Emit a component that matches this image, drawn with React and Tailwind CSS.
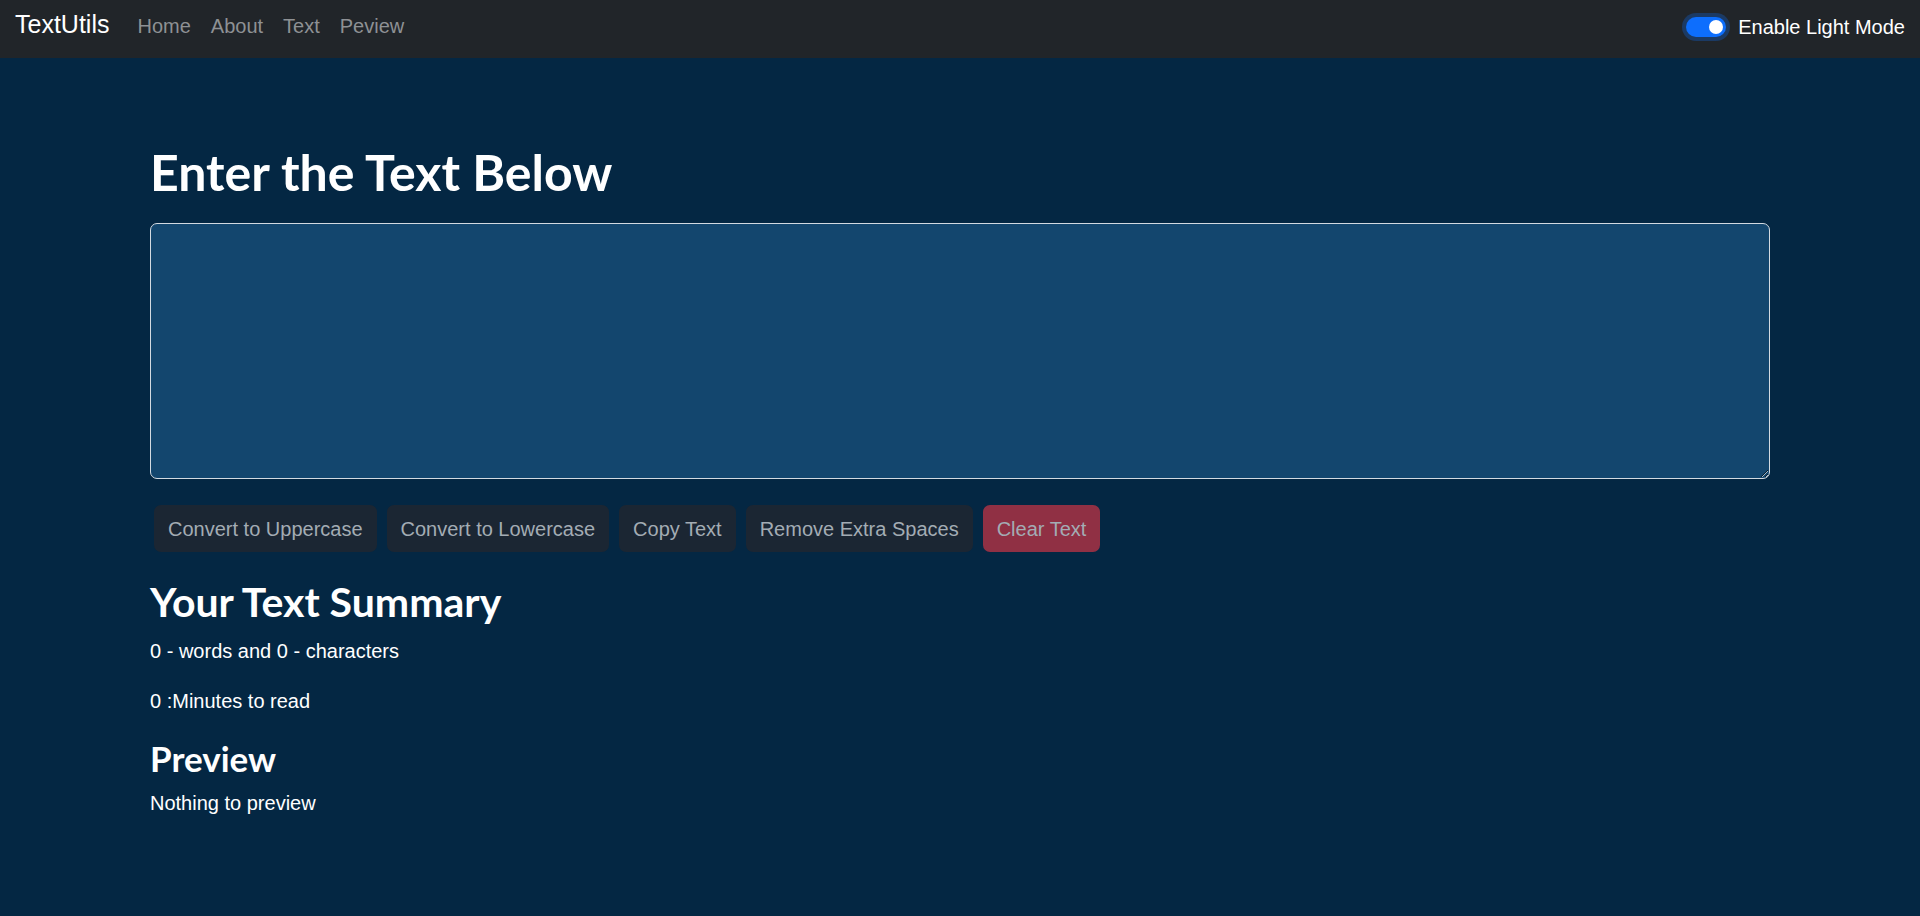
import { useState } from "react";

const Navbar = ({ onToggle }) => {
  return (
    <nav className="h-[58px] bg-[#212529] flex items-baseline justify-between px-[15px] pt-[6px]">
      <div className="flex items-baseline">
        <a href="#" className="text-[25px] leading-[37px] text-white mr-[18px]">
          TextUtils
        </a>
        <ul className="flex items-baseline text-[20px] leading-[30px] text-[#8e9194]">
          <li className="px-[10px]">Home</li>
          <li className="px-[10px]">About</li>
          <li className="px-[10px]">Text</li>
          <li className="px-[10px]">Peview</li>
        </ul>
      </div>
      <div className="flex items-center self-center mb-[10px]">
        <button
          onClick={onToggle}
          className="w-[40px] h-[20px] rounded-full bg-[#0d6efd] flex items-center justify-end pr-[3px] ring-[4px] ring-[#1b3a64] mr-[12px]"
        >
          <span className="w-[14px] h-[14px] rounded-full bg-white"></span>
        </button>
        <span className="text-[20px] leading-[30px] text-white">Enable Light Mode</span>
      </div>
    </nav>
  );
};

const Btn = ({ children, danger }) => (
  <button
    disabled
    className={`h-[47px] px-[14px] rounded-[7px] text-[20px] leading-[30px] text-[#a3acb4] mx-[5px] ${
      danger ? "bg-[#903044]" : "bg-[#1b2633]"
    }`}
  >
    {children}
  </button>
);

const heading = { fontFamily: 'Lato, "Liberation Sans", sans-serif' };

export default function App() {
  const [text, setText] = useState("");
  const words = text.split(/\s+/).filter((w) => w.length > 0).length;

  return (
    <div
      className="min-h-[916px] bg-[#042743] text-white"
      style={{ fontFamily: '"Liberation Sans", Arial, sans-serif' }}
    >
      <Navbar onToggle={() => {}} />

      <div className="px-[150px] pt-[84px]">
        {/* Text area */}
        <h1 style={heading} className="text-[50px] leading-[60px] font-bold mb-[21px]">
          Enter the Text Below
        </h1>
        <textarea
          value={text}
          onChange={(e) => setText(e.target.value)}
          className="block w-full h-[256px] bg-[#13466e] border border-[#d3dae1] rounded-[7px] text-white text-[20px] px-[15px] py-[8px] outline-none"
        ></textarea>

        <div className="flex mt-[26px] -mx-[1px]">
          <Btn>Convert to Uppercase</Btn>
          <Btn>Convert to Lowercase</Btn>
          <Btn>Copy Text</Btn>
          <Btn>Remove Extra Spaces</Btn>
          <Btn danger>Clear Text</Btn>
        </div>

        {/* Summary */}
        <h2 style={heading} className="text-[41px] leading-[48px] font-bold mt-[26px] mb-[10px]">
          Your Text Summary
        </h2>
        <p className="text-[20px] leading-[30px] mb-[20px]">
          {words} - words and {text.length} - characters
        </p>
        <p className="text-[20px] leading-[30px] mb-[21px]">{0.008 * words} :Minutes to read</p>
        <h2 style={heading} className="text-[35px] leading-[42px] font-bold mb-[9px]">
          Preview
        </h2>
        <p className="text-[20px] leading-[30px]">{text.length > 0 ? text : "Nothing to preview"}</p>
      </div>
    </div>
  );
}
